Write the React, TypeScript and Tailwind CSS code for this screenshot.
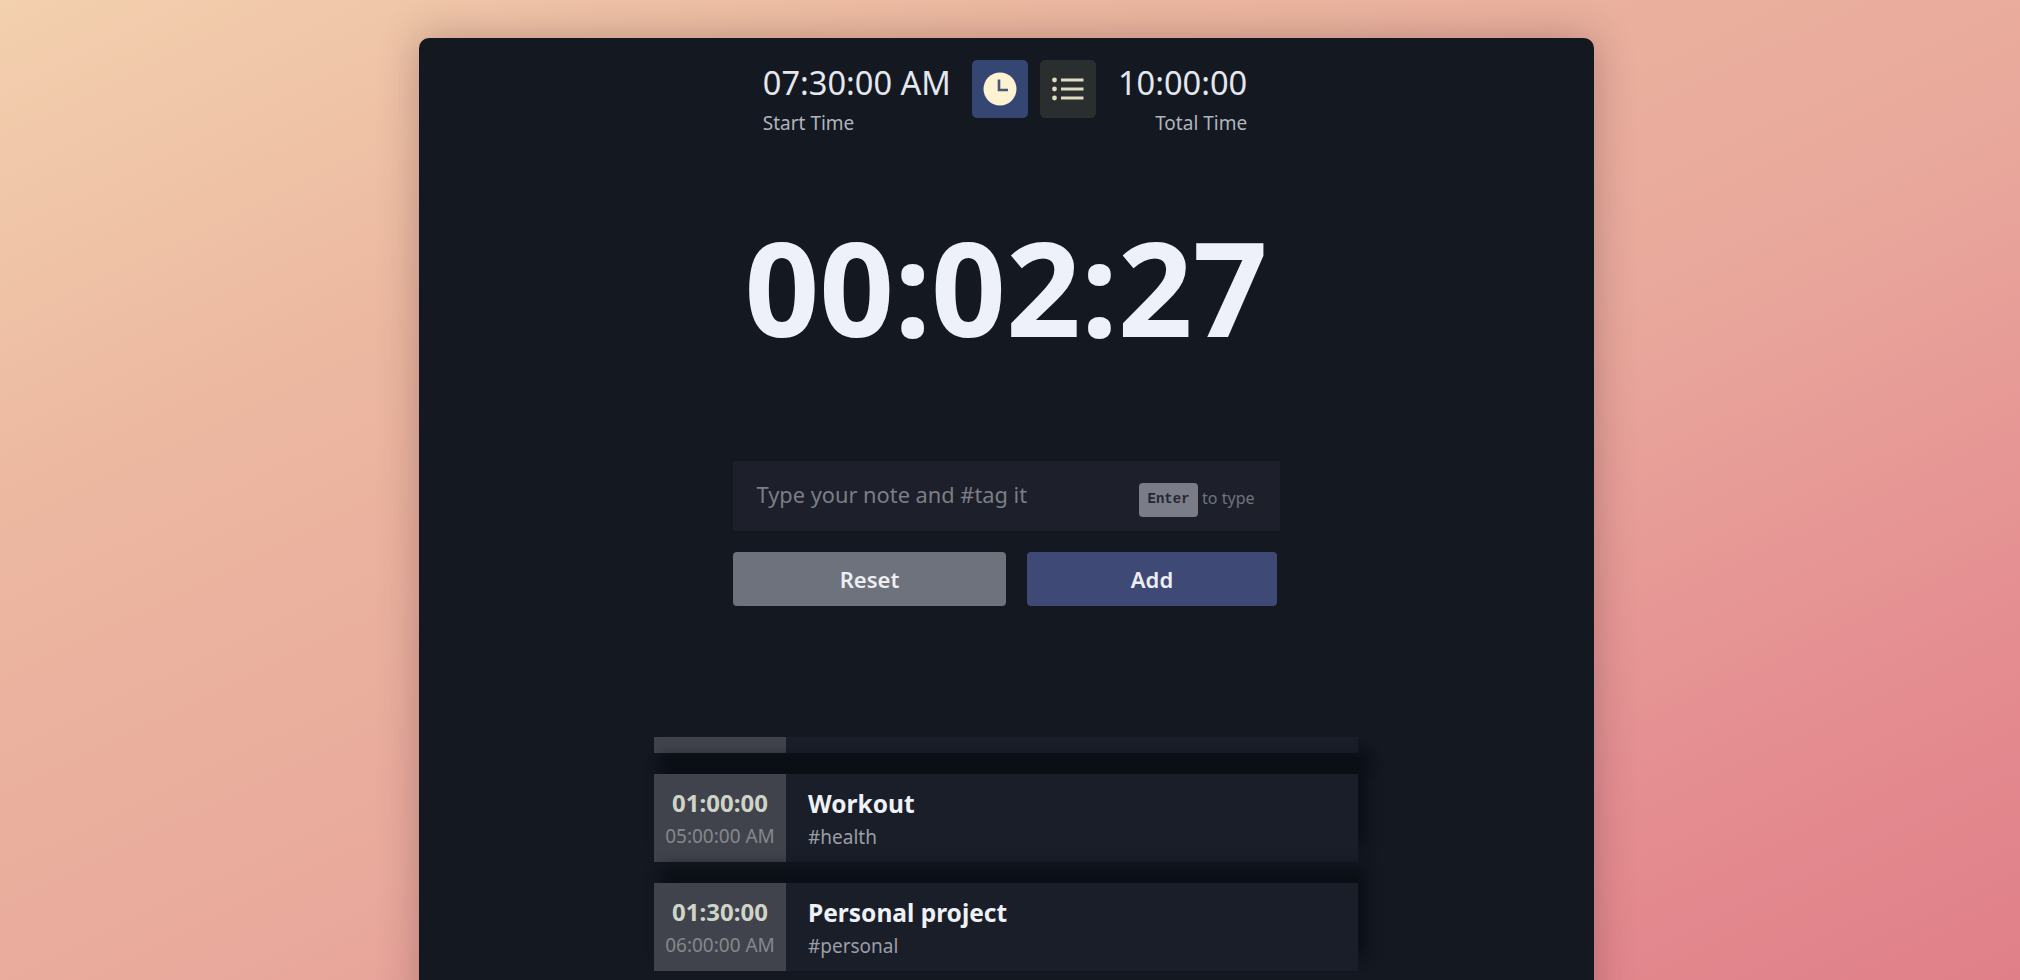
const font = "font-['Noto_Sans',sans-serif]";

const TimeStat = ({ value, label, right }: { value: string; label: string; right?: boolean }) => (
  <div className={`flex flex-col pt-[1px] ${right ? "items-end" : "items-start"}`}>
    <span className="text-[32.6px] leading-[44px] text-[#e4e7ee]">{value}</span>
    <span className="mt-[6px] text-[19px] leading-6 text-[#b0b4be]">{label}</span>
  </div>
);

const TaskRow = ({ duration, start, title, tag }: { duration: string; start: string; title: string; tag: string }) => (
  <div className="flex h-[88px] w-[704px] bg-[#1a1e28] shadow-[8px_-16px_12px_#0b0f16]">
    <div className="flex w-[132px] flex-col items-center justify-center bg-[#40434b]">
      <span className="text-[24px] leading-[30px] font-bold text-[#cfd4c8]">{duration}</span>
      <span className="mt-[6px] text-[19px] leading-6 text-[#85888b]">{start}</span>
    </div>
    <div className="flex flex-col justify-center pl-[22px]">
      <span className="text-[24.5px] leading-8 font-bold text-[#eef1f6]">{title}</span>
      <span className="mt-[5px] text-[19px] leading-6 text-[#9b9ea6]">{tag}</span>
    </div>
  </div>
);

export default function App() {
  return (
    <div
      className={`${font} flex h-[980px] items-start justify-center overflow-hidden bg-[linear-gradient(to_bottom_right,#f3d0ae_0%,#ecb8a0_26%,#e9a99c_55%,#e58f92_80%,#e07f88_100%)] pt-[38px] pr-2`}
    >
      <main className="flex h-[1100px] w-[1175px] flex-col items-center rounded-[10px] bg-[#141821] shadow-[0_0_40px_rgba(60,30,40,0.3)]">
        <header className="mt-[22px] mr-[2px] flex items-start">
          <TimeStat value="07:30:00 AM" label="Start Time" />
          <div className="mr-[22px] ml-[21px] flex gap-3">
            <button className="flex h-[58px] w-[56px] items-center justify-center rounded-[5px] bg-[#364672]">
              <svg viewBox="0 0 36 36" className="h-9 w-9">
                <circle cx="18" cy="18" r="16.5" fill="#fdf3d2" />
                <path d="M17 8.5v10.5h9" fill="none" stroke="#4a5678" strokeWidth="2.6" />
              </svg>
            </button>
            <button className="flex h-[58px] w-[56px] items-center justify-center rounded-[5px] bg-[#2a2e2e]">
              <svg viewBox="0 0 34 30" className="h-[30px] w-[34px]" fill="#dfdcc0">
                <circle cx="3.5" cy="6" r="2.4" />
                <circle cx="3.5" cy="15" r="2.4" />
                <circle cx="3.5" cy="24" r="2.4" />
                <rect x="10" y="4.5" width="22.5" height="3" />
                <rect x="10" y="13.5" width="22.5" height="3" />
                <rect x="10" y="22.5" width="22.5" height="3" />
              </svg>
            </button>
          </div>
          <TimeStat value="10:00:00" label="Total Time" right />
        </header>

        <h1 className="mt-[58px] text-[131px] leading-[186px] font-bold text-[#eef1fa]">00:02:27</h1>

        <div className="mt-[82px] flex h-[70px] w-[547px] items-center bg-[#1d202a] pr-[25px] pl-6">
          <span className="-mt-[2px] text-[21.8px] text-[#7b7e87]">Type your note and #tag it</span>
          <kbd className="mt-[7px] ml-auto flex h-[34px] w-[59px] items-center justify-center rounded-[4px] bg-[#7a7d87] font-['Liberation_Mono',monospace] text-[14px] font-bold text-[#252831]">
            Enter
          </kbd>
          <span className="mt-1 ml-1 text-[16px] text-[#70737c]">to type</span>
        </div>

        <div className="mt-[21px] flex w-[546px] gap-[21px]">
          <button className="h-[54px] w-[273px] rounded-[4px] bg-[#6e727d] text-[22px] font-semibold text-[#eceef2]">Reset</button>
          <button className="h-[54px] w-[250px] rounded-[4px] bg-[#3e4976] text-[22px] font-semibold text-[#eceef2]">Add</button>
        </div>

        <section className="mt-[131px] flex flex-col gap-[21px]">
          <div className="flex h-4 w-[704px] bg-[#1a1e28] shadow-[8px_16px_12px_#0b0f16]">
            <div className="w-[132px] bg-[#40434b]" />
          </div>
          <TaskRow duration="01:00:00" start="05:00:00 AM" title="Workout" tag="#health" />
          <TaskRow duration="01:30:00" start="06:00:00 AM" title="Personal project" tag="#personal" />
        </section>
      </main>
    </div>
  );
}
